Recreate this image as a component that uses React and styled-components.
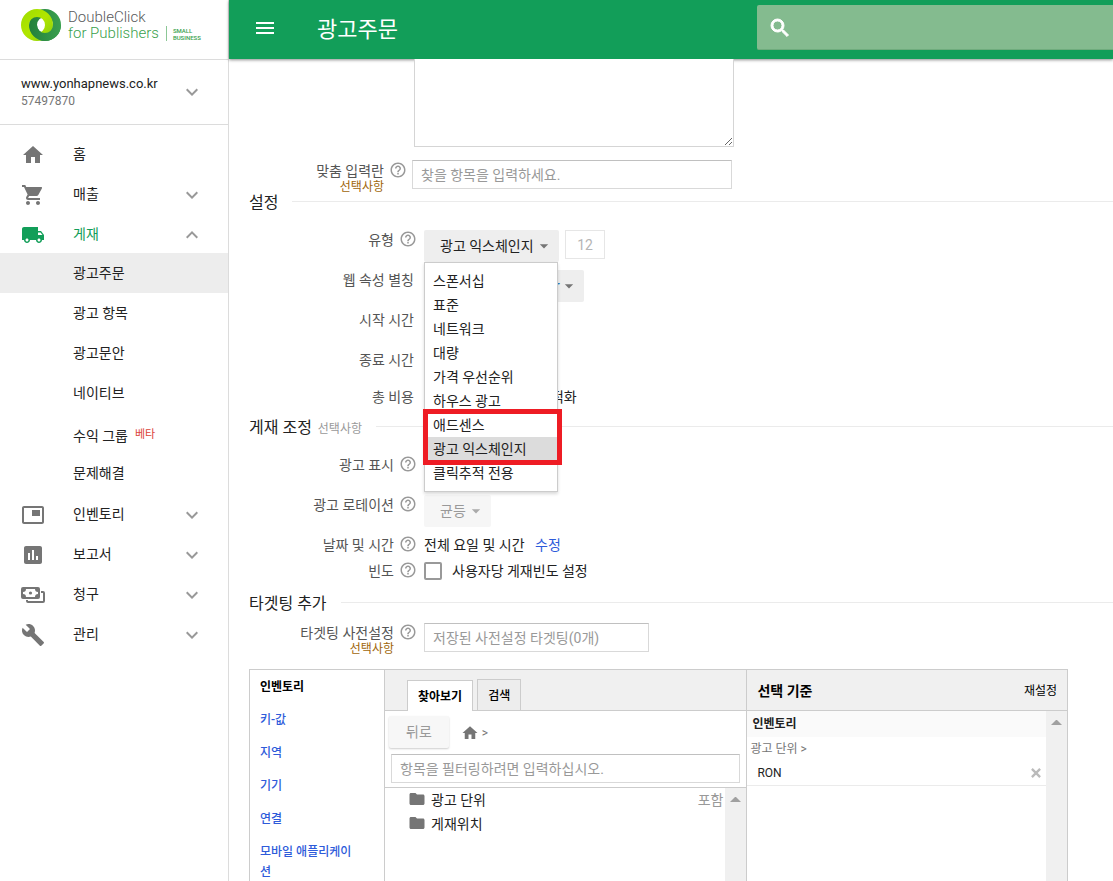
import React from "react";
import styled, { createGlobalStyle } from "styled-components";
import {
  MdHome,
  MdShoppingCart,
  MdLocalShipping,
  MdPictureInPicture,
  MdAssessment,
  MdBuild,
  MdExpandMore,
  MdExpandLess,
  MdMenu,
  MdSearch,
  MdHelpOutline,
  MdFolder,
  MdArrowDropDown,
  MdClose,
} from "react-icons/md";

const subItems = [
  { label: "광고주문", active: true },
  { label: "광고 항목" },
  { label: "광고문안" },
  { label: "네이티브" },
  { label: "수익 그룹", badge: "베타" },
  { label: "문제해결" },
];

const adTypes = [
  "스폰서십",
  "표준",
  "네트워크",
  "대량",
  "가격 우선순위",
  "하우스 광고",
  "애드센스",
  "광고 익스체인지",
  "클릭추적 전용",
];

const targetingLinks = ["키-값", "지역", "기기", "연결", "모바일 애플리케이션"];

// two interlocked rings: lime goes over at the top, green over at the bottom
function Logo() {
  return (
    <svg width="40" height="32" viewBox="0 0 40 32" aria-hidden="true">
      <defs>
        <linearGradient id="lime" x1="0" y1="0" x2="1" y2="1">
          <stop offset="0" stopColor="#9cdc00" />
          <stop offset="0.5" stopColor="#b2e600" />
          <stop offset="1" stopColor="#86cc10" />
        </linearGradient>
        <linearGradient id="leaf" x1="0" y1="0" x2="1" y2="0">
          <stop offset="0" stopColor="#23803a" />
          <stop offset="1" stopColor="#3aa04f" />
        </linearGradient>
      </defs>
      <path
        fill="url(#leaf)"
        fillRule="evenodd"
        d="M24 0a16 16 0 1 1 0 32a16 16 0 1 1 0-32zM24 8a8 8 0 1 0 0 16a8 8 0 1 0 0-16z"
      />
      <path
        fill="url(#lime)"
        fillRule="evenodd"
        d="M16 0a16 16 0 1 1 0 32a16 16 0 1 1 0-32zM16 8a8 8 0 1 0 0 16a8 8 0 1 0 0-16z"
      />
      <path fill="url(#leaf)" d="M8 16a16 16 0 0 0 32 0h-8a8 8 0 0 1-16 0z" />
    </svg>
  );
}

function MoneyIcon() {
  return (
    <svg width="24" height="24" viewBox="0 0 24 24" fill="currentColor" aria-hidden="true">
      <path
        fillRule="evenodd"
        d="M2 4h15a2 2 0 0 1 2 2v8a2 2 0 0 1-2 2H2a2 2 0 0 1-2-2V6a2 2 0 0 1 2-2zm3 2a3 3 0 0 1-3 3v2a3 3 0 0 1 3 3h9a3 3 0 0 1 3-3V9a3 3 0 0 1-3-3z"
      />
      <circle cx="9.5" cy="10" r="1.6" />
      <path d="M20 8h2a2 2 0 0 1 2 2v8a2 2 0 0 1-2 2H7a2 2 0 0 1-2-2v-1h2v1h15v-8h-2z" />
    </svg>
  );
}

function NavItem({ icon, label, arrow, active }) {
  return (
    <NavButton type="button" $active={active}>
      {icon}
      <span>{label}</span>
      {arrow === "down" && <MdExpandMore className="arrow" />}
      {arrow === "up" && <MdExpandLess className="arrow" />}
    </NavButton>
  );
}

function FormRow({ label, htmlFor, help, optional, height, narrow, children }) {
  return (
    <Row $height={height} $narrow={narrow}>
      <LabelCell $help={help} $narrow={narrow}>
        <label htmlFor={htmlFor}>
          {label}
          {optional && <small>선택사항</small>}
        </label>
        {help && <MdHelpOutline />}
      </LabelCell>
      {children}
    </Row>
  );
}

function Select({ id, options, width, disabled, link }) {
  return (
    <SelectWrap $width={width} $disabled={disabled}>
      <select id={id} disabled={disabled} className={link ? "link" : ""}>
        {options.map((option) => (
          <option key={option}>{option}</option>
        ))}
      </select>
      <MdArrowDropDown />
    </SelectWrap>
  );
}

export default function App() {
  return (
    <Page>
      <GlobalStyle />
      <Sidebar>
        <Brand>
          <Logo />
          <div className="name">
            <span>DoubleClick</span>
            <span className="green">for Publishers</span>
          </div>
          <div className="edition">
            <span>SMALL</span>
            <span>BUSINESS</span>
          </div>
        </Brand>
        <Account type="button">
          <div>
            <strong>www.yonhapnews.co.kr</strong>
            <span>57497870</span>
          </div>
          <MdExpandMore />
        </Account>
        <Nav>
          <NavItem icon={<MdHome />} label="홈" />
          <NavItem icon={<MdShoppingCart />} label="매출" arrow="down" />
          <NavItem icon={<MdLocalShipping />} label="게재" arrow="up" active />
          {subItems.map((item) => (
            <SubItem key={item.label} href="#" $active={item.active} $badge={item.badge}>
              {item.label}
              {item.badge && <sup>{item.badge}</sup>}
            </SubItem>
          ))}
          <NavItem icon={<MdPictureInPicture />} label="인벤토리" arrow="down" />
          <NavItem icon={<MdAssessment />} label="보고서" arrow="down" />
          <NavItem icon={<MoneyIcon />} label="청구" arrow="down" />
          <NavItem icon={<MdBuild />} label="관리" arrow="down" />
        </Nav>
      </Sidebar>

      <Content>
        <Header>
          <button type="button" aria-label="메뉴">
            <MdMenu />
          </button>
          <h1>광고주문</h1>
          <SearchBox>
            <MdSearch />
            <input type="search" aria-label="검색" />
          </SearchBox>
        </Header>

        <Form>
          <Notes aria-label="메모" />
          <FormRow label="맞춤 입력란" htmlFor="custom" help optional narrow height={31}>
            <TextInput id="custom" $width={320} placeholder="찾을 항목을 입력하세요." />
          </FormRow>

          <SectionTitle $space={17}>설정</SectionTitle>
          <FormRow label="유형" htmlFor="type" help>
            <TypeField>
              <Select id="type" width={135} options={["광고 익스체인지"]} />
              <Menu role="listbox" aria-label="유형">
                {adTypes.map((type) => (
                  <MenuItem
                    key={type}
                    role="option"
                    aria-selected={type === "광고 익스체인지"}
                    $selected={type === "광고 익스체인지"}
                  >
                    {type}
                  </MenuItem>
                ))}
                <Marker />
              </Menu>
            </TypeField>
            <Priority aria-label="우선순위" defaultValue="12" disabled />
          </FormRow>
          <FormRow label="웹 속성 별칭" htmlFor="property">
            <Select id="property" width={160} link options={["yonhapnews.co.kr"]} />
          </FormRow>
          <FormRow label="시작 시간" htmlFor="start">
            <Select id="start" width={120} options={["즉시"]} />
          </FormRow>
          <FormRow label="종료 시간" htmlFor="end" height={37}>
            <Select id="end" width={120} options={["무제한"]} />
          </FormRow>
          <FormRow label="총 비용" htmlFor="cost" height={29}>
            <CostField>
              <input id="cost" />
              <span>최적화</span>
            </CostField>
          </FormRow>

          <SectionTitle $space={17}>
            게재 조정 <small>선택사항</small>
          </SectionTitle>
          <FormRow label="광고 표시" htmlFor="display" help>
            <Select id="display" width={120} options={["하나 이상"]} disabled />
          </FormRow>
          <FormRow label="광고 로테이션" htmlFor="rotation" help>
            <Select id="rotation" width={67} options={["균등"]} disabled />
          </FormRow>
          <FormRow label="날짜 및 시간" help height={26}>
            <Value>
              전체 요일 및 시간 <a href="#">수정</a>
            </Value>
          </FormRow>
          <FormRow label="빈도" help height={31}>
            <CheckLabel>
              <input type="checkbox" />
              사용자당 게재빈도 설정
            </CheckLabel>
          </FormRow>

          <SectionTitle $space={9}>타겟팅 추가</SectionTitle>
          <FormRow label="타겟팅 사전설정" htmlFor="preset" help optional height={46}>
            <TextInput id="preset" $width={225} placeholder="저장된 사전설정 타겟팅(0개)" />
          </FormRow>

          <Targeting>
            <TargetNav>
              <strong>인벤토리</strong>
              {targetingLinks.map((link) => (
                <a href="#" key={link}>
                  {link}
                </a>
              ))}
            </TargetNav>

            <Browse>
              <Tabs role="tablist">
                <Tab type="button" role="tab" aria-selected="true" $active>
                  찾아보기
                </Tab>
                <Tab type="button" role="tab" aria-selected="false">
                  검색
                </Tab>
              </Tabs>
              <Crumbs>
                <button type="button" disabled>
                  뒤로
                </button>
                <MdHome />
                <span>&gt;</span>
              </Crumbs>
              <Filter>
                <TextInput aria-label="필터" placeholder="항목을 필터링하려면 입력하십시오." />
              </Filter>
              <TreeArea>
                <Tree>
                  <li>
                    <MdFolder />
                    광고 단위
                    <button type="button">포함</button>
                  </li>
                  <li>
                    <MdFolder />
                    게재위치
                  </li>
                </Tree>
                <ScrollTrack>
                  <i />
                </ScrollTrack>
              </TreeArea>
            </Browse>

            <Selected>
              <SelectedHead>
                <h2>선택 기준</h2>
                <button type="button">재설정</button>
              </SelectedHead>
              <TreeArea>
                <Criteria>
                  <h3>인벤토리</h3>
                  <p>광고 단위 &gt;</p>
                  <div>
                    RON
                    <button type="button" aria-label="삭제">
                      <MdClose />
                    </button>
                  </div>
                </Criteria>
                <ScrollTrack>
                  <i />
                </ScrollTrack>
              </TreeArea>
            </Selected>
          </Targeting>
        </Form>
      </Content>
    </Page>
  );
}

const GlobalStyle = createGlobalStyle`
  * {
    box-sizing: border-box;
  }
  body {
    margin: 0;
    background: #fff;
    color: #222;
    font-family: Roboto, "Noto Sans CJK KR", sans-serif;
    font-size: 14px;
    line-height: 20px;
  }
  button, input, select, textarea {
    font: inherit;
    color: inherit;
    margin: 0;
  }
  button {
    padding: 0;
    border: none;
    background: none;
    text-align: left;
  }
  a {
    color: #2e5bda;
    text-decoration: none;
  }
  svg {
    flex: none;
  }
`;

const Page = styled.div`
  display: flex;
  height: 100vh;
  overflow: hidden;
`;

const Sidebar = styled.aside`
  flex: 0 0 229px;
  border-right: 1px solid #dcdcdc;
`;

const Brand = styled.div`
  display: flex;
  height: 60px;
  padding: 9px 0 0 21px;
  border-bottom: 1px solid #dcdcdc;
  .name {
    display: flex;
    flex-direction: column;
    margin-left: 7px;
    font-size: 15px;
    font-weight: 300;
    line-height: 16px;
    color: #58595b;
  }
  .green {
    color: #3a9f4d;
  }
  .edition {
    display: flex;
    flex-direction: column;
    justify-content: center;
    align-self: flex-start;
    height: 15px;
    margin: 17px 0 0 7px;
    padding-left: 6px;
    border-left: 1px solid #8cc796;
    color: #3a9f4d;
    font-size: 6px;
    font-weight: 500;
    line-height: 7px;
  }
`;

const Account = styled.button`
  display: flex;
  align-items: center;
  justify-content: space-between;
  width: 100%;
  height: 65px;
  padding: 0 24px 0 21px;
  border-bottom: 1px solid #dcdcdc;
  line-height: 16px;
  strong {
    display: block;
    font-size: 13px;
    font-weight: 400;
  }
  span {
    color: #757575;
    font-size: 12px;
  }
  svg {
    color: #999;
    font-size: 24px;
  }
`;

const Nav = styled.nav`
  padding-top: 8px;
`;

const NavButton = styled.button`
  display: flex;
  align-items: center;
  width: 100%;
  height: 40px;
  padding: 2px 24px 0 21px;
  color: ${(props) => (props.$active ? "#129e59" : "#222")};
  svg {
    margin-top: 2px;
    color: ${(props) => (props.$active ? "#129e59" : "#757575")};
    font-size: 24px;
  }
  span {
    margin-left: 28px;
  }
  .arrow {
    margin-left: auto;
    color: #999;
  }
`;

const SubItem = styled.a`
  display: block;
  height: 40px;
  padding: ${(props) => (props.$badge ? "13px" : "10px")} 0 0 73px;
  background: ${(props) => (props.$active ? "#ededed" : "transparent")};
  color: #222;
  sup {
    margin-left: 7px;
    color: #db4437;
    font-size: 11px;
    line-height: 1;
    vertical-align: 3px;
  }
`;

const Content = styled.main`
  flex: 1;
  min-width: 0;
`;

const Header = styled.header`
  display: flex;
  align-items: center;
  height: 59px;
  background: #129e59;
  color: #fff;
  box-shadow: 0 1px 3px rgba(0, 0, 0, 0.45);
  button {
    display: flex;
    margin: 0 40px 4px 24px;
    font-size: 24px;
  }
  h1 {
    margin: 0;
    font-size: 22px;
    font-weight: 400;
    line-height: 28px;
  }
`;

const SearchBox = styled.label`
  display: flex;
  align-items: center;
  width: 356px;
  height: 45px;
  margin: 0 0 4px auto;
  padding-left: 11px;
  border-bottom: 1px solid #6fac7d;
  border-radius: 2px 0 0 2px;
  background: #84bb8f;
  font-size: 24px;
  svg {
    margin-top: 2px;
  }
  path:not([fill="none"]) {
    stroke: currentColor;
    stroke-width: 1px;
  }
  input {
    flex: 1;
    min-width: 0;
    border: none;
    outline: none;
    background: transparent;
    font-size: 16px;
  }
`;

const Form = styled.form`
  padding-left: 20px;
`;

const Notes = styled.textarea`
  position: relative;
  display: block;
  width: 320px;
  height: 88px;
  margin: 0 0 13px 165px;
  border: 1px solid #d5d5d5;
  border-top: none;
  background: #fff;
`;

const Row = styled.div`
  display: grid;
  grid-template-columns: ${(props) => (props.$narrow ? "158px" : "168px")} auto auto;
  column-gap: ${(props) => (props.$narrow ? "5px" : "7px")};
  justify-content: start;
  align-items: start;
  height: ${(props) => props.$height || 40}px;
`;

const LabelCell = styled.div`
  display: flex;
  justify-content: flex-end;
  gap: 5px;
  padding-top: ${(props) => (props.$narrow ? "1px" : "0")};
  padding-right: ${(props) => (props.$help ? "0" : "3px")};
  color: #555;
  text-align: right;
  small {
    display: block;
    color: #a0660a;
    font-size: 12px;
    line-height: 12px;
  }
  svg {
    color: #999;
    font-size: 18px;
  }
`;

const TextInput = styled.input`
  width: ${(props) => (props.$width ? props.$width + "px" : "100%")};
  height: 29px;
  padding: 0 8px;
  border: 1px solid #d9d9d9;
  border-top-color: #c0c0c0;
  background: #fff;
  &::placeholder {
    color: #999;
    opacity: 1;
  }
`;

const SectionTitle = styled.h2`
  display: flex;
  align-items: center;
  margin: 0 0 ${(props) => props.$space}px;
  padding-top: 1px;
  color: #222;
  font-size: 16px;
  font-weight: 400;
  line-height: 21px;
  white-space: pre;
  small {
    margin-left: 2px;
    padding-top: 3px;
    color: #999;
    font-size: 12px;
    line-height: 16px;
  }
  &::after {
    content: "";
    flex: 1;
    height: 1px;
    margin: 0 0 2px 14px;
    background: #ebebeb;
  }
`;

const SelectWrap = styled.div`
  position: relative;
  width: ${(props) => props.$width}px;
  height: 32px;
  border-radius: 2px;
  background: ${(props) => (props.$disabled ? "#f6f6f6" : "#eee")};
  color: ${(props) => (props.$disabled ? "#999" : "#222")};
  select {
    width: 100%;
    height: 32px;
    padding: 0 16px;
    border: none;
    background: transparent;
    appearance: none;
    opacity: 1;
  }
  .link {
    padding-left: 23px;
    color: #0b6fb8;
  }
  svg {
    position: absolute;
    right: 5px;
    top: 6px;
    color: ${(props) => (props.$disabled ? "#aaa" : "#757575")};
    font-size: 20px;
    pointer-events: none;
  }
`;

const TypeField = styled.div`
  position: relative;
`;

const Menu = styled.ul`
  position: absolute;
  z-index: 2;
  top: 32px;
  left: 0;
  width: 134px;
  margin: 0;
  padding: 6px 0;
  border: 1px solid #ccc;
  background: #fff;
  box-shadow: 0 2px 3px rgba(0, 0, 0, 0.15);
  list-style: none;
`;

const MenuItem = styled.li`
  padding: 0 8px;
  background: ${(props) => (props.$selected ? "#dcdcdc" : "transparent")};
  line-height: 24px;
`;

const Marker = styled.div`
  position: absolute;
  top: 146px;
  left: -2px;
  width: 139px;
  height: 56px;
  border: 5px solid #ee1c24;
`;

const Priority = styled.input`
  width: 40px;
  height: 29px;
  margin-left: -1px;
  border: 1px solid #e6e6e6;
  background: #fff;
  color: #b5b5b5;
  text-align: center;
`;

const CostField = styled.div`
  display: flex;
  gap: 8px;
  input {
    width: 106px;
    height: 20px;
    border: 1px solid #d9d9d9;
  }
`;

const Value = styled.div`
  a {
    margin-left: 7px;
  }
`;

const CheckLabel = styled.label`
  display: flex;
  align-items: center;
  gap: 10px;
  input {
    width: 18px;
    height: 18px;
    border: 2px solid #999;
    border-radius: 2px;
    background: #fff;
    appearance: none;
  }
`;

const Targeting = styled.section`
  display: flex;
  min-height: 260px;
  margin-right: 45px;
  border: 1px solid #ccc;
`;

const TargetNav = styled.nav`
  display: flex;
  flex: 0 0 134px;
  flex-direction: column;
  gap: 13px;
  padding: 7px 28px 0 10px;
  font-size: 12px;
  strong {
    color: #000;
    font-weight: 700;
  }
  a {
    font-weight: 500;
  }
`;

const Browse = styled.div`
  display: flex;
  flex: 362 1 0;
  flex-direction: column;
  border: solid #ccc;
  border-width: 0 1px;
`;

const Tabs = styled.div`
  display: flex;
  align-items: flex-end;
  gap: 4px;
  height: 41px;
  padding-left: 22px;
  border-bottom: 1px solid #ccc;
  background: #f0f0f0;
`;

const Tab = styled.button`
  height: 31px;
  margin-bottom: ${(props) => (props.$active ? "-1px" : "0")};
  padding: 1px 10px 0;
  border: 1px solid #ccc;
  border-bottom: none;
  background: ${(props) => (props.$active ? "#fff" : "#ededed")};
  color: #000;
  font-size: 12px;
  font-weight: ${(props) => (props.$active ? 700 : 500)};
`;

const Crumbs = styled.div`
  display: flex;
  align-items: center;
  padding: 5px 4px;
  color: #757575;
  font-size: 12px;
  button {
    height: 32px;
    padding: 0 17px;
    border-radius: 2px;
    background: #f7f7f7;
    box-shadow: 0 1px 2px rgba(0, 0, 0, 0.2);
    color: #999;
    font-size: 14px;
  }
  svg {
    margin: 2px 3px 0 12px;
    font-size: 18px;
  }
  span {
    padding-top: 2px;
  }
`;

const Filter = styled.div`
  padding: 1px 6px 4px;
  border-bottom: 1px solid #ccc;
`;

const TreeArea = styled.div`
  display: flex;
  flex: 1;
`;

const Tree = styled.ul`
  flex: 1;
  margin: 0;
  padding: 0 2px 0 23px;
  list-style: none;
  li {
    display: flex;
    gap: 5px;
    line-height: 24px;
  }
  svg {
    margin-top: 2px;
    color: #757575;
    font-size: 18px;
  }
  button {
    margin-left: auto;
    color: #999;
  }
`;

const ScrollTrack = styled.div`
  flex: 0 0 21px;
  padding: 9px 5px;
  background: #f0f0f0;
  i {
    display: block;
    border: 5px solid transparent;
    border-top: none;
    border-bottom-color: #a0a0a0;
  }
`;

const Selected = styled.div`
  display: flex;
  flex: 320 1 0;
  flex-direction: column;
`;

const SelectedHead = styled.div`
  display: flex;
  align-items: center;
  justify-content: space-between;
  height: 41px;
  padding: 2px 10px 0;
  border-bottom: 1px solid #ccc;
  background: #f0f0f0;
  color: #000;
  h2 {
    margin: 0;
    font-size: 14px;
    font-weight: 700;
  }
  button {
    font-size: 12px;
  }
`;

const Criteria = styled.div`
  flex: 1;
  font-size: 12px;
  h3 {
    margin: 0;
    padding: 1px 0 0 5px;
    background: #fafafa;
    font-size: 12px;
    font-weight: 700;
    line-height: 25px;
  }
  p {
    margin: 0;
    padding-left: 3px;
    color: #757575;
    line-height: 24px;
  }
  div {
    display: flex;
    align-items: center;
    justify-content: space-between;
    height: 25px;
    padding: 0 3px 0 10px;
    border-bottom: 1px solid #ebebeb;
  }
  button {
    display: flex;
    color: #bbb;
    font-size: 14px;
  }
  path:not([fill="none"]) {
    stroke: currentColor;
    stroke-width: 2px;
  }
`;
